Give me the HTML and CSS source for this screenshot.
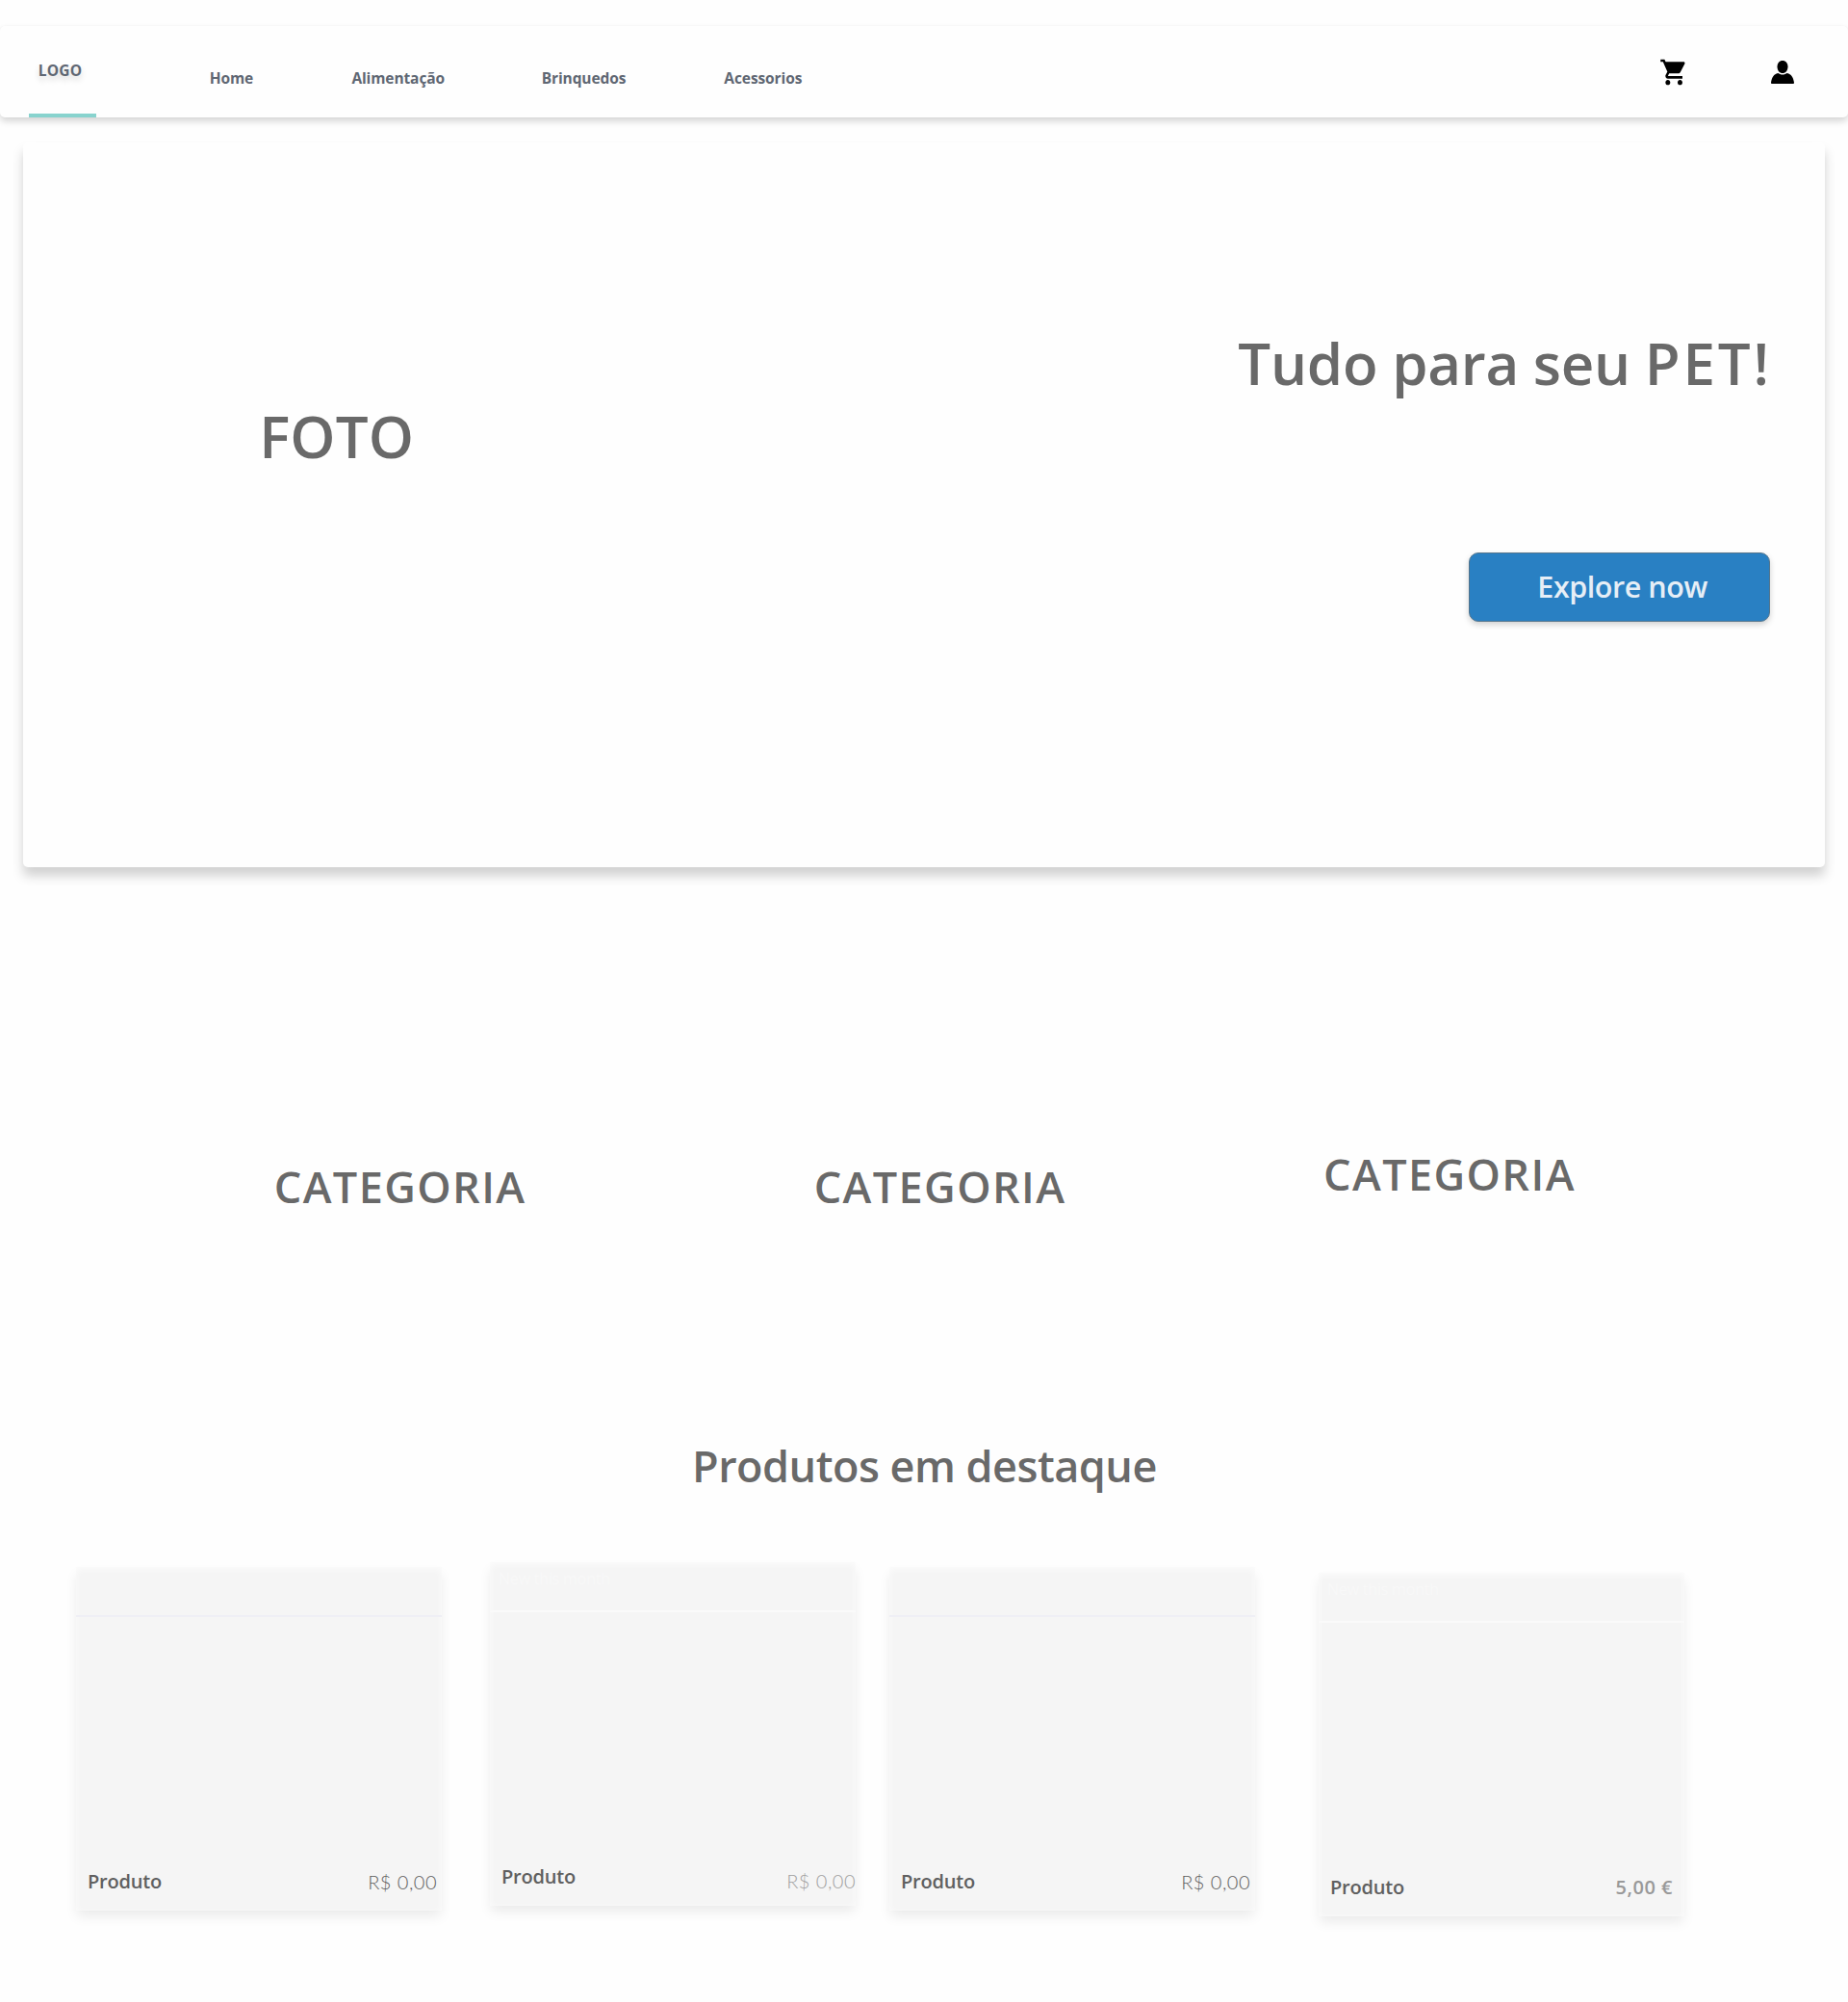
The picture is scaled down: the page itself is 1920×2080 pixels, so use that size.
FILE: index.html
```html
<!DOCTYPE html>
<html lang="pt-BR">
<head>
  <meta charset="utf-8">
  <title>Pet shop</title>
  <link rel="stylesheet" href="styles.css">
</head>
<body>
  <header class="topbar">
    <a class="logo">LOGO</a>
    <nav class="menu">
      <a>Home</a>
      <a>Alimentação</a>
      <a>Brinquedos</a>
      <a>Acessorios</a>
    </nav>
    <div class="actions">
      <svg class="cart" viewBox="0 0 24 24" preserveAspectRatio="none"><path d="M7 18c-1.1 0-1.99.9-1.99 2S5.900 22 7 22s2-.9 2-2-.9-2-2-2zM1 2v2h2l3.600 7.590-1.350 2.450c-.16.28-.25.61-.25.96 0 1.100.9 2 2 2h12v-2H7.420c-.14 0-.25-.11-.25-.25l.03-.12.9-1.630h7.450c.75 0 1.410-.41 1.750-1.030l3.580-6.490c.08-.14.12-.31.12-.48 0-.55-.45-1-1-1H5.210l-.94-2H1zm16 16c-1.100 0-1.990.9-1.990 2s.89 2 1.990 2 2-.9 2-2-.9-2-2-2z"/></svg>
      <svg class="user" viewBox="0 0 24 24"><path d="M12 0c3.300 0 5.500 2.600 5.500 6.200 0 3.900-2.400 6.900-5.500 6.900s-5.500-3-5.500-6.900C6.500 2.600 8.700 0 12 0z"/><path d="M7.300 13c1.200.9 2.900 1.500 4.700 1.500s3.500-.6 4.700-1.500c4.500.9 6.300 4.300 7.300 9.800 0 .8-.4 1.200-1.200 1.200H1.200C.4 24 0 23.600 0 22.800 1 17.300 2.800 13.900 7.300 13z"/></svg>
    </div>
  </header>

  <section class="hero">
    <div class="photo">FOTO</div>
    <div class="pitch">
      <h1>Tudo para seu <span class="pet">PET!</span></h1>
      <a class="explore">Explore now</a>
    </div>
  </section>

  <section class="categories">
    <h2>CATEGORIA</h2>
    <h2>CATEGORIA</h2>
    <h2 class="raised">CATEGORIA</h2>
  </section>

  <h2 class="featured-title">Produtos em destaque</h2>

  <section class="products">
    <article class="card first">
      <div class="card-head"></div>
      <div class="card-foot"><span class="name">Produto</span><span class="price">R$ 0,00</span></div>
    </article>
    <article class="card second">
      <div class="card-head light">New this month</div>
      <div class="card-foot"><span class="name">Produto</span><span class="price pale">R$ 0,00</span></div>
    </article>
    <article class="card third">
      <div class="card-head"></div>
      <div class="card-foot"><span class="name">Produto</span><span class="price">R$ 0,00</span></div>
    </article>
    <article class="card fourth">
      <div class="card-head light">New this month</div>
      <div class="card-foot"><span class="name">Produto</span><span class="price euro">5,00 €</span></div>
    </article>
  </section>
</body>
</html>
```
FILE: styles.css
```css
* { box-sizing: border-box; }

body {
  margin: 0;
  padding-top: 27px;
  height: 2080px;
  background: #fefefe;
  color: #696969;
  font-family: "Open Sans", "Noto Sans", sans-serif;
  font-weight: 600;
}

h1, h2 { margin: 0; font-weight: 600; white-space: nowrap; }

.topbar {
  display: flex;
  height: 95px;
  padding-left: 30px;
  border-radius: 5px;
  background: #fefefe;
  box-shadow: 0 4px 7px rgba(0, 0, 0, .16), 0 0 2px rgba(0, 0, 0, .03);
  color: #5f6773;
  font-size: 15.5px;
  font-weight: 700;
  line-height: 24px;
}

.logo {
  width: 70px;
  padding: 34px 0 0 9.800px;
  border-bottom: 4px solid #88d3ce;
  letter-spacing: .2px;
  text-shadow: 0 4px 6px rgba(0, 0, 0, .16);
}

.menu {
  display: grid;
  grid-template-columns: 147.700px 197.300px 189.700px auto;
  margin: 42px 0 0 117.700px;
  letter-spacing: -.1px;
}

.actions {
  display: flex;
  gap: 86px;
  margin: 32px 56px 0 auto;
}

.cart { width: 30.300px; height: 32px; fill: #000; }
.user { width: 24px; height: 24px; margin-top: 4px; fill: #000; }

.hero {
  display: flex;
  justify-content: space-between;
  height: 753px;
  margin: 26px 24px 0;
  padding: 192.7px 56.700px 0 245.2px;
  border-radius: 5px;
  background: #fefefe;
  box-shadow: 0 9px 12px rgba(0, 0, 0, .18);
  font-size: 60px;
  line-height: 72px;
}

.photo { margin-top: 76px; letter-spacing: .2px; }

.pitch {
  display: flex;
  flex-direction: column;
  width: 554px;
}

.pitch h1 {
  padding-left: 1px;
  font-size: 60px;
  letter-spacing: -.25px;
  word-spacing: -.5px;
}

.pet { letter-spacing: 2.8px; }

.explore {
  align-self: flex-end;
  width: 313px;
  height: 72px;
  margin-top: 161px;
  padding: 14px 0 0 70px;
  border: 1px solid #55758c;
  border-radius: 10px;
  background: #2980c3;
  box-shadow: 0 3px 6px rgba(0, 0, 0, .18);
  color: #e6eef6;
  font-size: 30.500px;
  line-height: 40px;
  letter-spacing: -.45px;
}

.categories {
  display: grid;
  grid-template-columns: 560.900px 529.400px auto;
  margin-top: 304px;
  padding-left: 284.800px;
}

.categories h2 { font-size: 45px; line-height: 56px; letter-spacing: 1.400px; }
.categories .raised { margin-top: -13px; }

.featured-title {
  margin: 234px 0 0 719px;
  font-size: 45px;
  line-height: 56px;
  letter-spacing: -.500px;
}

.products {
  display: flex;
  align-items: flex-start;
  margin: 72px 0 0 79px;
}

.card {
  display: flex;
  flex-direction: column;
  justify-content: space-between;
  width: 380px;
  height: 357px;
  padding-bottom: 17px;
  background: #f5f5f5;
  box-shadow: 0 7px 12px -1px rgba(0, 0, 0, .08), inset 0 2px 7px rgba(255, 255, 255, .75);
}

.first { margin-top: 5px; }
.second { margin-left: 50px; }
.third { margin: 5px 0 0 35px; }
.fourth { margin: 11px 0 0 66px; }

.card-head {
  height: 52px;
  padding: 6px 0 0 9px;
  border-bottom: 2px solid #efeff5;
  color: #f8f8f8;
  font-size: 16px;
  font-weight: 400;
  line-height: 22px;
  letter-spacing: -.2px;
}

.card-head.light { border-color: #fafafa; }

.card-foot {
  display: flex;
  justify-content: space-between;
  padding: 0 5px 0 12px;
  font-size: 20px;
  line-height: 26px;
}

.name { color: #606060; letter-spacing: -.2px; }

.price {
  color: #606060;
  font-family: Lato, "Open Sans", sans-serif;
  font-weight: 300;
  letter-spacing: .5px;
}

.pale { position: relative; top: 4px; left: 5px; color: #a0a0a0; }

.euro {
  margin-right: 7px;
  color: #999;
  font-family: "Open Sans", sans-serif;
  font-weight: 600;
  letter-spacing: .500px;
}
```
